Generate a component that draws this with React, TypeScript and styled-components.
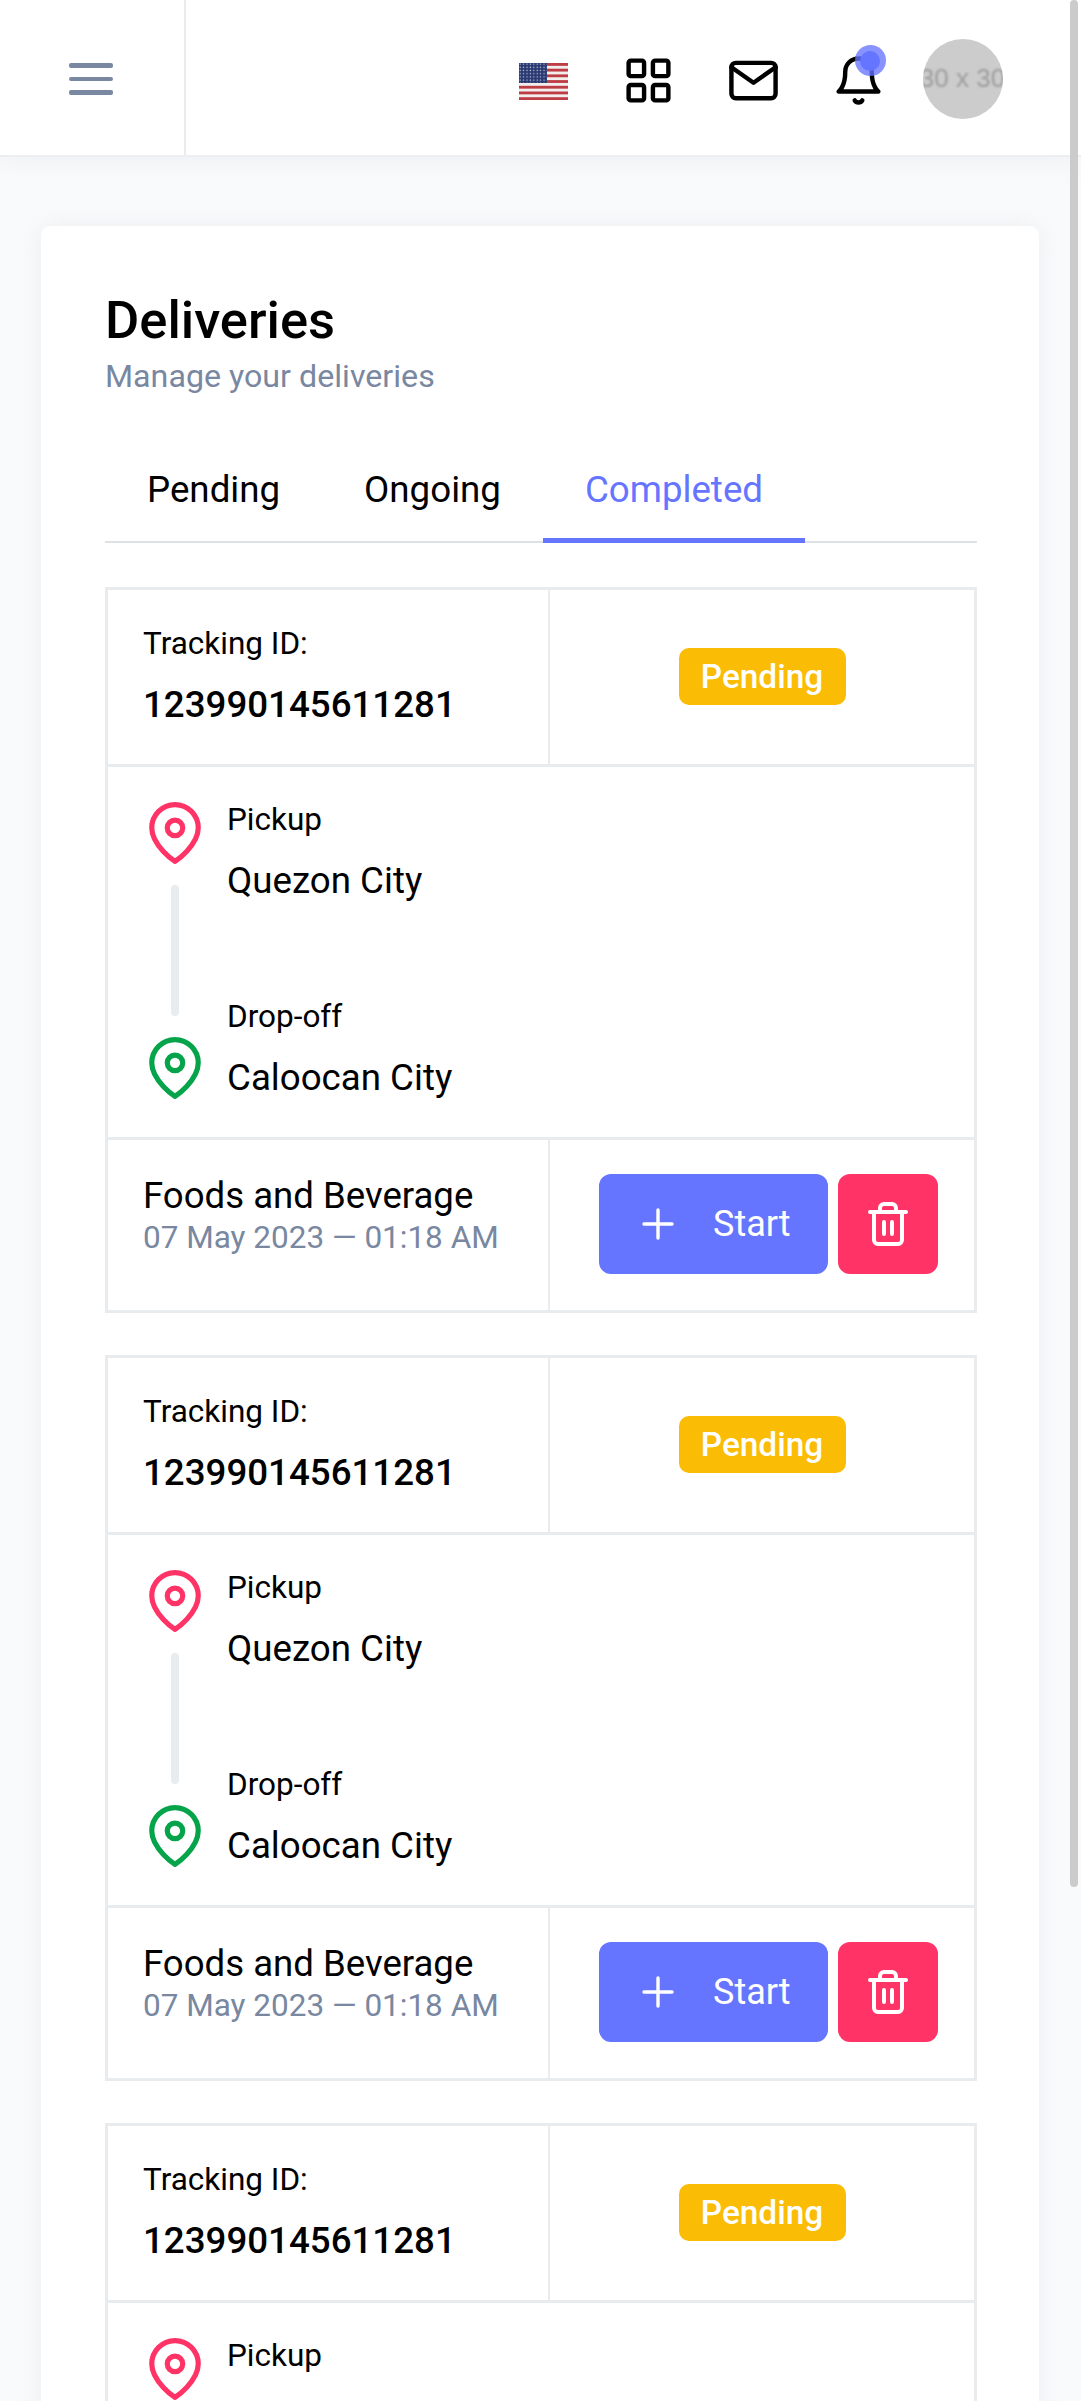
import React from 'react'
import styled, { createGlobalStyle } from 'styled-components'

const GlobalStyle = createGlobalStyle`
  html, body {
    margin: 0;
    padding: 0;
    background: #f9fafb;
    overflow: hidden;
  }
  * {
    box-sizing: border-box;
  }
  #root {
    height: 2401px;
    overflow: hidden;
    font-family: Roboto, "Liberation Sans", sans-serif;
    color: #000;
  }
`

const ScrollThumb = styled.div`
  position: fixed;
  top: 0;
  right: 3px;
  width: 8px;
  height: 1887px;
  border-radius: 4px;
  background: #cbcbcb;
  z-index: 10;
`

const Header = styled.header`
  height: 157px;
  background: #fff;
  display: flex;
  align-items: stretch;
  border-bottom: 2px solid #eceef1;
  box-shadow: 0 4px 24px rgba(183, 192, 206, 0.16);
`

const MenuCell = styled.div`
  width: 186px;
  border-right: 2px solid #e9ecef;
  display: flex;
  align-items: center;
  justify-content: center;
  padding-right: 2px;
`

const MenuIcon = styled.div`
  width: 44px;
  display: flex;
  flex-direction: column;
  gap: 9px;
  margin-top: 3px;
  span {
    display: block;
    height: 4.5px;
    border-radius: 2px;
    background: #7987a1;
  }
`

const Nav = styled.nav`
  flex: 1;
  display: flex;
  justify-content: flex-end;
  align-items: center;
  padding: 5px 65px 0 0;
`

const NavItem = styled.div`
  position: relative;
  width: 105px;
  display: flex;
  justify-content: center;
  align-items: center;
`

const Flag = styled.svg`
  width: 49px;
  height: 37px;
  display: block;
  margin-top: 3px;
`

const NavIcon = styled.svg`
  width: 53px;
  height: 53px;
  display: block;
  fill: none;
  stroke: #000;
  stroke-width: 2;
  stroke-linecap: round;
  stroke-linejoin: round;
`

const BellDot = styled.span`
  position: absolute;
  top: -3px;
  left: 54px;
  width: 20px;
  height: 20px;
  border-radius: 50%;
  background: #6675ff;
  &::after {
    content: '';
    position: absolute;
    inset: -5.5px;
    border-radius: 50%;
    background: rgba(102, 117, 255, 0.78);
  }
`

const Avatar = styled.div`
  width: 80px;
  height: 80px;
  border-radius: 50%;
  background: #cccccc;
  overflow: hidden;
  display: flex;
  align-items: center;
  justify-content: center;
  margin: -3px 0 0 -2px;
  span {
    font-family: "Liberation Sans", sans-serif;
    font-size: 26px;
    color: #9c9c9c;
    white-space: nowrap;
    filter: blur(0.9px);
  }
`

const Content = styled.main`
  padding: 69px 42px 0 41px;
`

const Card = styled.section`
  background: #fff;
  border-radius: 9px;
  padding: 64px 62px 0 64px;
  box-shadow: 0 0 24px rgba(183, 192, 206, 0.2);
`

const Title = styled.h4`
  margin: 0;
  font-size: 52.5px;
  line-height: 60px;
  font-weight: 500;
`

const Subtitle = styled.p`
  margin: 6px 0 0;
  font-size: 32.2px;
  line-height: 40px;
  color: #7987a1;
`

const TabBar = styled.div`
  display: flex;
  margin-top: 48px;
  border-bottom: 2px solid #dee2e6;
`

const Tab = styled.div<{ $active?: boolean }>`
  padding: 24px 42px 26px;
  margin-bottom: -2px;
  font-size: 36.7px;
  line-height: 44px;
  color: ${p => (p.$active ? '#6675ff' : '#000')};
  border-bottom: 5px solid ${p => (p.$active ? '#6675ff' : 'transparent')};
`

const DeliveryTable = styled.article`
  margin-top: 43.5px;
  border: 3px solid #e9ecef;
  & + & {
    margin-top: 42px;
  }
`

const Row = styled.div`
  display: grid;
  grid-template-columns: 440px 1fr;
  & + & {
    border-top: 3px solid #e9ecef;
  }
`

const Cell = styled.div`
  display: flex;
  flex-direction: column;
  justify-content: center;
  padding-left: 35px;
`

const SideCell = styled.div`
  border-left: 2px solid #e9ecef;
  display: flex;
  align-items: center;
  justify-content: center;
`

const TrackingCell = styled(Cell)`
  padding-top: 35px;
  padding-bottom: 37px;
`

const SmallLabel = styled.div`
  font-size: 31.5px;
  line-height: 38px;
`

const TrackingNumber = styled.div`
  margin-top: 20px;
  font-size: 36.7px;
  line-height: 44px;
  font-weight: 500;
`

const Badge = styled.span`
  width: 167px;
  height: 57px;
  border-radius: 10px;
  background: #fbbc06;
  color: #fff;
  font-size: 33.4px;
  font-weight: 500;
  display: flex;
  align-items: center;
  justify-content: center;
`

const RouteWrap = styled.div`
  grid-column: 1 / 3;
  display: flex;
  padding: 36px 0 36.5px 36px;
`

const Rail = styled.div`
  width: 62px;
  display: flex;
  flex-direction: column;
  align-items: center;
  gap: 22px;
`

const Pin = styled.svg<{ $color: string }>`
  width: 62px;
  height: 62px;
  display: block;
  margin: -1px 0;
  fill: none;
  stroke: ${p => p.$color};
  stroke-width: 2;
  stroke-linecap: round;
  stroke-linejoin: round;
`

const RailLine = styled.div`
  width: 8px;
  height: 131px;
  border-radius: 4px;
  background: #e9ecef;
`

const Stops = styled.div`
  margin: -1.5px 0 0 21px;
  display: flex;
  flex-direction: column;
`

const Stop = styled.div`
  & + & {
    margin-top: 95px;
  }
`

const Place = styled.div`
  margin-top: 20px;
  font-size: 36.7px;
  line-height: 44px;
`

const InfoCell = styled(Cell)`
  padding-bottom: 19px;
`

const InfoName = styled.div`
  font-size: 36.6px;
  line-height: 44px;
`

const InfoDate = styled.div`
  margin-top: 2.5px;
  font-size: 31.5px;
  line-height: 36px;
  color: #7987a1;
`

const Actions = styled(SideCell)`
  gap: 10px;
  padding: 34px 0 36px 49px;
  justify-content: flex-start;
`

const StartButton = styled.button`
  width: 229px;
  height: 100px;
  border: 0;
  border-radius: 12px;
  background: #6675ff;
  color: #fff;
  font-family: inherit;
  font-size: 36px;
  display: flex;
  align-items: center;
  padding: 0 0 0 35px;
  gap: 31px;
`

const TrashButton = styled.button`
  width: 100px;
  height: 100px;
  border: 0;
  border-radius: 12px;
  background: #ff3366;
  display: flex;
  align-items: center;
  justify-content: center;
  padding: 0;
`

const ButtonIcon = styled.svg`
  width: 48px;
  height: 48px;
  display: block;
  fill: none;
  stroke: #fff;
  stroke-width: 2;
  stroke-linecap: round;
  stroke-linejoin: round;
`

const PlusIcon = styled(ButtonIcon)`
  stroke-width: 1.7;
`

const UsFlag = () => (
  <Flag viewBox="0 0 49 37">
    <defs>
      <pattern id="stars" width="3.4" height="3.2" patternUnits="userSpaceOnUse">
        <rect width="3.4" height="3.2" fill="#2a3a72" />
        <circle cx="1.2" cy="1.1" r="0.65" fill="#c8cde0" />
      </pattern>
    </defs>
    <rect width="49" height="37" fill="#f3eeee" />
    {[0, 1, 2, 3, 4, 5, 6].map(i => (
      <rect key={i} y={i * 5.7} width="49" height="2.85" fill="#bd3d44" />
    ))}
    <rect width="28" height="20" fill="url(#stars)" />
  </Flag>
)

const MapPin = ({ color }: { color: string }) => (
  <Pin $color={color} viewBox="0 0 24 24">
    <path d="M21 10c0 7-9 13-9 13s-9-6-9-13a9 9 0 0 1 18 0z" />
    <circle cx="12" cy="10" r="3" />
  </Pin>
)

const Delivery = () => (
  <DeliveryTable>
    <Row>
      <TrackingCell>
        <SmallLabel>Tracking ID:</SmallLabel>
        <TrackingNumber>123990145611281</TrackingNumber>
      </TrackingCell>
      <SideCell>
        <Badge>Pending</Badge>
      </SideCell>
    </Row>
    <Row>
      <RouteWrap>
        <Rail>
          <MapPin color="#ff3366" />
          <RailLine />
          <MapPin color="#05a34a" />
        </Rail>
        <Stops>
          <Stop>
            <SmallLabel>Pickup</SmallLabel>
            <Place>Quezon City</Place>
          </Stop>
          <Stop>
            <SmallLabel>Drop-off</SmallLabel>
            <Place>Caloocan City</Place>
          </Stop>
        </Stops>
      </RouteWrap>
    </Row>
    <Row>
      <InfoCell>
        <InfoName>Foods and Beverage</InfoName>
        <InfoDate>07 May 2023 — 01:18 AM</InfoDate>
      </InfoCell>
      <Actions>
        <StartButton>
          <PlusIcon viewBox="0 0 24 24">
            <line x1="12" y1="5" x2="12" y2="19" />
            <line x1="5" y1="12" x2="19" y2="12" />
          </PlusIcon>
          Start
        </StartButton>
        <TrashButton>
          <ButtonIcon viewBox="0 0 24 24">
            <polyline points="3 6 5 6 21 6" />
            <path d="M19 6v14a2 2 0 0 1-2 2H7a2 2 0 0 1-2-2V6m3 0V4a2 2 0 0 1 2-2h4a2 2 0 0 1 2 2v2" />
            <line x1="10" y1="11" x2="10" y2="17" />
            <line x1="14" y1="11" x2="14" y2="17" />
          </ButtonIcon>
        </TrashButton>
      </Actions>
    </Row>
  </DeliveryTable>
)

const App = () => (
  <>
    <GlobalStyle />
    <ScrollThumb />
    <Header>
      <MenuCell>
        <MenuIcon>
          <span />
          <span />
          <span />
        </MenuIcon>
      </MenuCell>
      <Nav>
        <NavItem>
          <UsFlag />
        </NavItem>
        <NavItem>
          <NavIcon viewBox="0 0 24 24">
            <rect x="3" y="3" width="7" height="7" rx="1" />
            <rect x="14" y="3" width="7" height="7" rx="1" />
            <rect x="14" y="14" width="7" height="7" rx="1" />
            <rect x="3" y="14" width="7" height="7" rx="1" />
          </NavIcon>
        </NavItem>
        <NavItem>
          <NavIcon viewBox="0 0 24 24">
            <path d="M4 4h16c1.1 0 2 .9 2 2v12c0 1.1-.9 2-2 2H4c-1.1 0-2-.9-2-2V6c0-1.1.9-2 2-2z" />
            <polyline points="22,6 12,13 2,6" />
          </NavIcon>
        </NavItem>
        <NavItem>
          <NavIcon viewBox="0 0 24 24">
            <path d="M18 8A6 6 0 0 0 6 8c0 7-3 9-3 9h18s-3-2-3-9" />
            <path d="M13.73 21a2 2 0 0 1-3.46 0" />
          </NavIcon>
          <BellDot />
        </NavItem>
        <NavItem>
          <Avatar>
            <span>30 x 30</span>
          </Avatar>
        </NavItem>
      </Nav>
    </Header>
    <Content>
      <Card>
        <Title>Deliveries</Title>
        <Subtitle>Manage your deliveries</Subtitle>
        <TabBar>
          <Tab>Pending</Tab>
          <Tab>Ongoing</Tab>
          <Tab $active>Completed</Tab>
        </TabBar>
        <Delivery />
        <Delivery />
        <Delivery />
      </Card>
    </Content>
  </>
)

export default App
